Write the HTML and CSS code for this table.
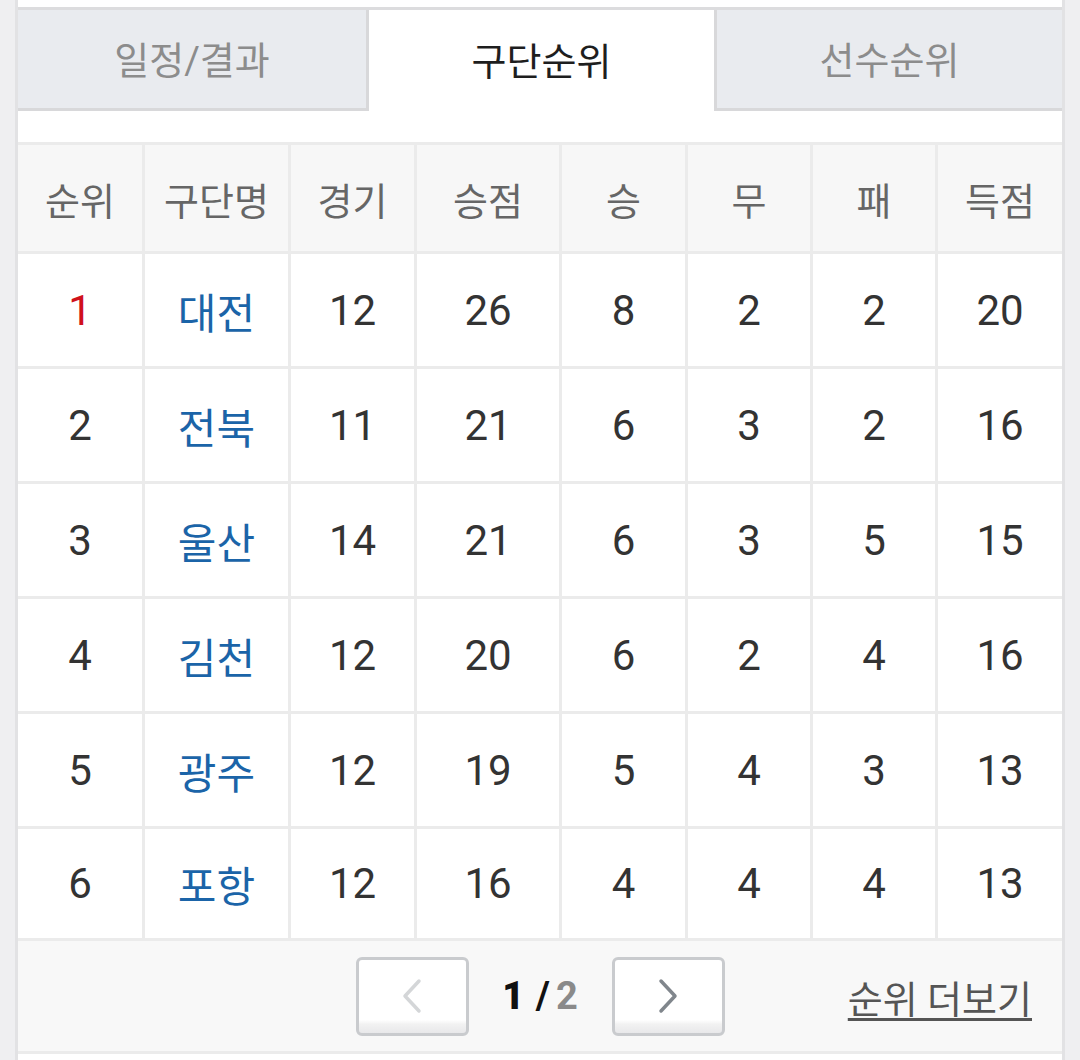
FILE: index.html
```html
<!DOCTYPE html>
<html>
  <head>
    <title>구단순위</title>
    <meta charset="utf-8">
    <link rel="stylesheet" href="styles.css">
  </head>
  <body>
    <div class="wrap">
      <div class="tabs">
        <a class="tab">일정/결과</a>
        <a class="tab on">구단순위</a>
        <a class="tab">선수순위</a>
      </div>

      <div class="rank">
        <div class="row head">
          <div>순위</div><div>구단명</div><div>경기</div><div>승점</div>
          <div>승</div><div>무</div><div>패</div><div>득점</div>
        </div>
        <div class="row">
          <div class="first">1</div><div class="team">대전</div><div>12</div><div>26</div>
          <div>8</div><div>2</div><div>2</div><div>20</div>
        </div>
        <div class="row">
          <div>2</div><div class="team">전북</div><div>11</div><div>21</div>
          <div>6</div><div>3</div><div>2</div><div>16</div>
        </div>
        <div class="row">
          <div>3</div><div class="team">울산</div><div>14</div><div>21</div>
          <div>6</div><div>3</div><div>5</div><div>15</div>
        </div>
        <div class="row">
          <div>4</div><div class="team">김천</div><div>12</div><div>20</div>
          <div>6</div><div>2</div><div>4</div><div>16</div>
        </div>
        <div class="row">
          <div>5</div><div class="team">광주</div><div>12</div><div>19</div>
          <div>5</div><div>4</div><div>3</div><div>13</div>
        </div>
        <div class="row">
          <div>6</div><div class="team">포항</div><div>12</div><div>16</div>
          <div>4</div><div>4</div><div>4</div><div>13</div>
        </div>
      </div>

      <div class="foot">
        <div class="pager">
          <button type="button" class="pbtn off">
            <svg width="24" height="36" viewBox="0 0 24 36"><polyline points="19,3 5,18 19,33" fill="none" stroke="#d4d6d8" stroke-width="3.5" stroke-linecap="round" stroke-linejoin="round"/></svg>
          </button>
          <span class="page"><b>1</b> /<em>2</em></span>
          <button type="button" class="pbtn">
            <svg width="24" height="36" viewBox="0 0 24 36"><polyline points="5,3 19,18 5,33" fill="none" stroke="#80868c" stroke-width="3.5" stroke-linecap="round" stroke-linejoin="round"/></svg>
          </button>
        </div>
        <a class="more">순위 더보기</a>
      </div>
    </div>
  </body>
</html>
```

FILE: styles.css
```css
body {
  margin: 0;
  background: #efeff1;
  font-family: Roboto, "Noto Sans CJK KR", sans-serif;
}
.wrap {
  margin: 0 15px;
  padding-top: 7px;
  min-height: 1053px;
  background: #fff;
  border-left: 3px solid #e2e2e4;
  border-right: 3px solid #e2e2e4;
}
.tabs {
  display: grid;
  grid-template-columns: 351px 345px 348px;
  border-top: 3px solid #dcdcde;
}
.tab {
  box-sizing: border-box;
  height: 101px;
  display: flex;
  align-items: center;
  justify-content: center;
  padding-bottom: 4px;
  font-size: 38px;
  color: #8c8c8c;
  background: #e9ebef;
  border-bottom: 3px solid #d8d8da;
}
.tab:first-child {
  border-right: 3px solid #d8d8da;
}
.tab:last-child {
  border-left: 3px solid #d8d8da;
}
.tab.on {
  color: #1e1e1e;
  background: #fff;
  border-bottom: 0;
}
.rank {
  margin-top: 31px;
  border-top: 3px solid #ebebeb;
}
.row {
  display: grid;
  grid-template-columns: 124px 146px 126px 145px 126px 125px 125px 127px;
  height: 115px;
  box-sizing: border-box;
  border-bottom: 3px solid #ebebeb;
}
.row:last-child {
  height: 112px;
}
.row div {
  display: flex;
  align-items: center;
  justify-content: center;
  font-size: 42px;
  color: #333;
  border-left: 3px solid #ebebeb;
}
.row div:first-child {
  border-left: 0;
}
.row.head {
  height: 109px;
  background: #f7f7f7;
}
.row.head div {
  font-size: 38px;
  color: #666;
}
.row .team {
  color: #1b64a8;
  font-size: 42px;
}
.row .first {
  color: #d0111b;
}
.foot {
  display: grid;
  grid-template-columns: 1fr auto 1fr;
  align-items: center;
  height: 113px;
  box-sizing: border-box;
  background: #f8f8f8;
  border-bottom: 3px solid #ebebeb;
}
.pager {
  grid-column: 2;
  display: flex;
  align-items: center;
}
.pbtn {
  width: 113px;
  height: 79px;
  display: flex;
  align-items: center;
  justify-content: center;
  border: 3px solid #c9cbce;
  border-radius: 6px;
  background: linear-gradient(#fff 82%, #f2f2f2 88%, #e8e8ea);
  padding: 0;
}
.page {
  width: 143px;
  text-align: center;
  font-size: 38px;
  font-weight: bold;
  color: #111;
  word-spacing: 2px;
}
.page em {
  font-style: normal;
  color: #8a8a8a;
  margin-left: 6px;
}
.more {
  justify-self: end;
  margin-right: 30px;
  font-size: 38px;
  color: #555;
  text-decoration: underline;
  text-decoration-thickness: 3px;
  text-underline-offset: 5px;
}
```
